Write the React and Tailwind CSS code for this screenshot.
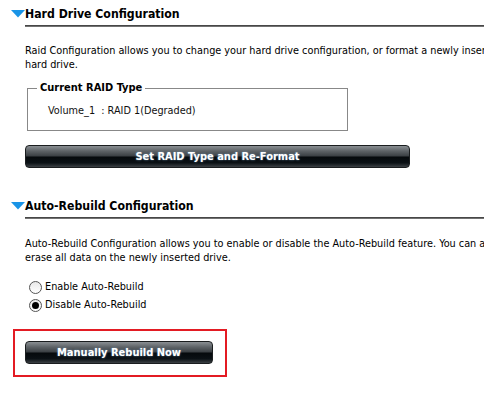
import React from "react";

function Tri() {
  return (
    <svg width="14" height="8" viewBox="0 0 14 8" className="shrink-0">
      <polygon points="0,0 14,0 7,7.5" fill="#1a94e6" />
    </svg>
  );
}

function Header({ title }) {
  return (
    <div>
      <div className="flex items-center pl-[11px] h-[16px]">
        <Tri />
        <span className="text-[12.2px] font-bold leading-[16px] text-black">{title}</span>
      </div>
      <div className="ml-[25px] mt-[3px] h-[2px] bg-gradient-to-b from-[#333] to-[#888] w-[600px]" />
    </div>
  );
}

function GlossButton({ label, w }) {
  return (
    <div
      className={`${w} h-[23px] rounded-[4px] border border-[#1a1d1f] flex items-center justify-center text-white font-bold text-[11px] bg-[linear-gradient(to_bottom,#8a8f93_0%,#5c6165_25%,#3a3f43_48%,#05090c_52%,#0b1115_80%,#3b4044_100%)] [text-shadow:0_0_2px_rgba(130,180,220,0.8)]`}
    >
      {label}
    </div>
  );
}

function Radio({ checked, label }) {
  return (
    <div className="flex items-center h-[18px]">
      <div className="ml-[29px] w-[13px] h-[13px] rounded-full border border-[#555] bg-gradient-to-b from-[#e8e8e8] to-white flex items-center justify-center">
        {checked && <div className="w-[7px] h-[7px] rounded-full bg-black" />}
      </div>
      <span className="ml-[3px] leading-[14px]">{label}</span>
    </div>
  );
}

export default function App() {
  return (
    <div
      className="w-[484px] h-[405px] overflow-hidden bg-white text-black text-[10.8px] leading-[14px] relative"
      style={{ fontFamily: '"DejaVu Sans Condensed", "DejaVu Sans", sans-serif', fontStretch: "condensed" }}
    >
      <div className="pt-[6px]">
        <Header title="Hard Drive Configuration" />
        <div className="ml-[25px] mt-[17px] whitespace-nowrap">
          <div>Raid Configuration allows you to change your hard drive configuration, or format a newly inserted</div>
          <div>hard drive.</div>
        </div>
        <fieldset className="ml-[27px] mt-[9px] w-[321px] h-[50px] border border-[#888] px-[9px] pt-0 pb-0">
          <legend className="font-bold px-[3px] text-[11px] leading-[14px]">Current RAID Type</legend>
          <div className="ml-[11px] mt-[9px] text-[#111]">Volume_1&nbsp; : RAID 1(Degraded)</div>
        </fieldset>
        <div className="ml-[25px] mt-[14px]">
          <GlossButton label="Set RAID Type and Re-Format" w="w-[385px]" />
        </div>
      </div>
      <div className="mt-[30px]">
        <Header title="Auto-Rebuild Configuration" />
        <div className="ml-[25px] mt-[18px] whitespace-nowrap">
          <div>Auto-Rebuild Configuration allows you to enable or disable the Auto-Rebuild feature. You can also</div>
          <div>erase all data on the newly inserted drive.</div>
        </div>
        <div className="mt-[13px]">
          <Radio label="Enable Auto-Rebuild" />
          <Radio checked label="Disable Auto-Rebuild" />
        </div>
        <div className="ml-[13px] mt-[15px] w-[214px] h-[48px] border-2 border-[#e31b23] pl-[10px] pt-[10px]">
          <GlossButton label="Manually Rebuild Now" w="w-[188px]" />
        </div>
      </div>
    </div>
  );
}
